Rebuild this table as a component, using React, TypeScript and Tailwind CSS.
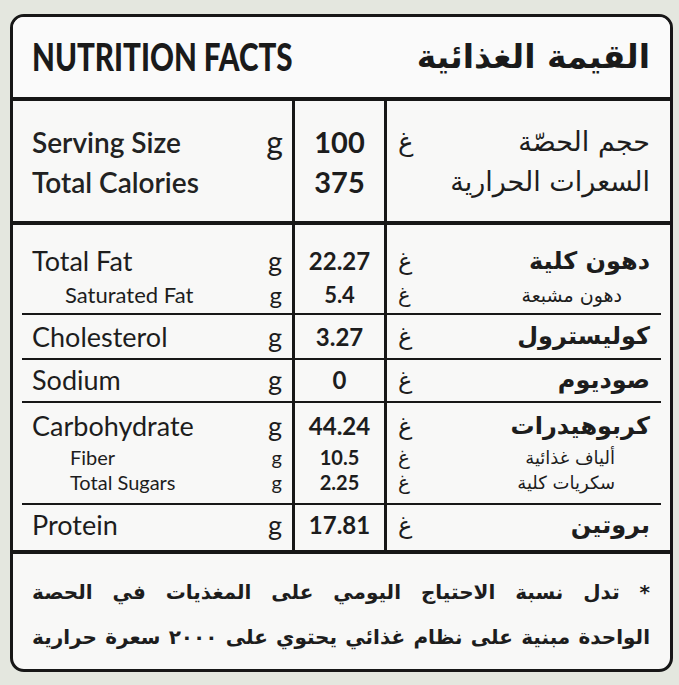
import React from 'react';

type Line = {
  en: string;
  ar: string;
  v: string;
  lh: string;
  sub?: boolean;
  tight?: boolean;
  enPad?: string;
  arPad?: string;
};

type Row = { h: string; pt: string; lines: Line[] };

const rows: Row[] = [
  {
    h: 'h-[88px]',
    pt: 'pt-[18px]',
    lines: [
      { en: 'Total Fat', ar: 'دهون كلية', v: '22.27', lh: 'h-[36px] leading-[36px]' },
      { en: 'Saturated Fat', ar: 'دهون مشبعة', v: '5.4', lh: 'h-[32px] leading-[32px]', sub: true, enPad: 'pl-[52px]', arPad: 'pr-[48px]' },
    ],
  },
  {
    h: 'h-[43px]',
    pt: 'pt-0',
    lines: [{ en: 'Cholesterol', ar: 'كوليسترول', v: '3.27', lh: 'h-[43px] leading-[43px]' }],
  },
  {
    h: 'h-[41px]',
    pt: 'pt-0',
    lines: [{ en: 'Sodium', ar: 'صوديوم', v: '0', lh: 'h-[40px] leading-[40px]' }],
  },
  {
    h: 'h-[100px]',
    pt: 'pt-[4px]',
    lines: [
      { en: 'Carbohydrate', ar: 'كربوهيدرات', v: '44.24', lh: 'h-[38px] leading-[38px]' },
      { en: 'Fiber', ar: 'ألياف غذائية', v: '10.5', lh: 'h-[25px] leading-[25px]', sub: true, tight: true, enPad: 'pl-[57px]', arPad: 'pr-[55px]' },
      { en: 'Total Sugars', ar: 'سكريات كلية', v: '2.25', lh: 'h-[25px] leading-[25px]', sub: true, tight: true, enPad: 'pl-[57px]', arPad: 'pr-[55px]' },
    ],
  },
  {
    h: 'h-[45px]',
    pt: 'pt-0',
    lines: [{ en: 'Protein', ar: 'بروتين', v: '17.81', lh: 'h-[40px] leading-[40px]' }],
  },
];

const lato = "font-['Lato','Open_Sans',sans-serif]";
const arab = "font-['DejaVu_Sans',sans-serif]";

function NutrientRow({ row }: { row: Row }) {
  return (
    <div className={`flex ${row.h}`}>
      <div className={`w-[282px] shrink-0 border-r-[3px] border-[#171717] ${row.pt}`}>
        {row.lines.map((l) => (
          <div key={l.en} className={`flex justify-between pr-[10px] ${l.lh} ${l.sub ? l.enPad : 'pl-[19px]'}`}>
            <span className={`${lato} ${l.tight ? 'text-[20px]' : l.sub ? 'text-[22px]' : 'text-[27px]'} text-[#1d1d1d]`}>{l.en}</span>
            <span className={`${lato} ${l.tight ? 'text-[20px]' : l.sub ? 'text-[24px]' : 'text-[27px]'} text-[#1d1d1d]`}>g</span>
          </div>
        ))}
      </div>
      <div className={`w-[92px] shrink-0 border-r-[3px] border-[#171717] ${row.pt}`}>
        {row.lines.map((l) => (
          <div key={l.en} className={`text-center ${l.lh} ${lato} font-bold ${l.tight ? 'text-[20px]' : l.sub ? 'text-[22px]' : 'text-[24px]'} text-[#1d1d1d]`}>
            {l.v}
          </div>
        ))}
      </div>
      <div className={`flex-1 ${row.pt}`}>
        {row.lines.map((l) => (
          <div key={l.en} className={`flex justify-between pl-[11px] ${l.lh} ${l.sub ? l.arPad : 'pr-[20px]'}`}>
            <span className={`${arab} ${l.tight ? 'text-[20px]' : l.sub ? 'text-[21px]' : 'text-[24px]'} text-[#1d1d1d]`}>غ</span>
            <span dir="rtl" className={`${arab} ${l.tight ? 'text-[18px]' : l.sub ? 'text-[19px]' : 'text-[24px] font-bold'} text-[#1d1d1d]`}>
              {l.ar}
            </span>
          </div>
        ))}
      </div>
    </div>
  );
}

function Sep() {
  return <div className="mx-[9px] h-[2px] bg-[#171717]" />;
}

export default function App() {
  return (
    <div className="w-[679px] h-[685px] bg-[#e4e7df] pt-[14px] pl-[10px]">
      <div className="w-[663px] h-[658px] rounded-[14px] border-[3px] border-[#171717] bg-[#f8f8f7] overflow-hidden flex flex-col">
        {/* Title */}
        <div className="h-[80px] shrink-0 flex items-center justify-between pl-[19px] pr-[20px] bg-[#fafafa]">
          <span className={`${lato} font-black text-[37px] text-[#1a1a1a] origin-left scale-x-[0.8] whitespace-nowrap`}>
            NUTRITION FACTS
          </span>
          <span dir="rtl" className={`${arab} font-bold text-[33px] text-[#1a1a1a]`}>
            القيمة الغذائية
          </span>
        </div>
        <div className="h-[4px] shrink-0 bg-[#171717]" />

        {/* Serving */}
        <div className="flex h-[120px] shrink-0">
          <div className="w-[282px] shrink-0 border-r-[3px] border-[#171717] pt-[21px]">
            <div className="flex justify-between pl-[19px] pr-[9px] h-[40px] leading-[40px]">
              <span className={`${lato} font-semibold text-[28px] text-[#222]`}>Serving Size</span>
              <span className={`${lato} text-[32px] text-[#1d1d1d]`}>g</span>
            </div>
            <div className="pl-[19px] h-[40px] leading-[40px]">
              <span className={`${lato} font-semibold text-[28px] text-[#222]`}>Total Calories</span>
            </div>
          </div>
          <div className="w-[92px] shrink-0 border-r-[3px] border-[#171717] pt-[21px]">
            <div className={`text-center h-[40px] leading-[40px] ${lato} font-bold text-[29px] text-[#1d1d1d]`}>100</div>
            <div className={`text-center h-[40px] leading-[40px] ${lato} font-bold text-[29px] text-[#1d1d1d]`}>375</div>
          </div>
          <div className="flex-1 pt-[21px]">
            <div className="flex justify-between pl-[11px] pr-[20px] h-[40px] leading-[40px]">
              <span className={`${arab} text-[26px] text-[#1d1d1d]`}>غ</span>
              <span dir="rtl" className={`${arab} text-[27px] text-[#1d1d1d]`}>حجم الحصّة</span>
            </div>
            <div className="flex justify-end pr-[20px] h-[40px] leading-[40px]">
              <span dir="rtl" className={`${arab} text-[27px] text-[#1d1d1d]`}>السعرات الحرارية</span>
            </div>
          </div>
        </div>
        <div className="h-[4px] shrink-0 bg-[#171717]" />

        {/* Nutrients */}
        <div className="flex flex-col shrink-0">
          {rows.map((r, i) => (
            <React.Fragment key={i}>
              <NutrientRow row={r} />
              {i < rows.length - 1 && <Sep />}
            </React.Fragment>
          ))}
        </div>
        <div className="h-[4px] shrink-0 bg-[#171717]" />

        {/* Footer */}
        <div dir="rtl" className={`flex-1 pt-[16px] pl-[19px] pr-[20px] ${arab} font-bold text-[20px] text-[#1d1d1d]`}>
          <div className="h-[45px] leading-[45px] whitespace-nowrap text-justify [text-align-last:justify]">
            * تدل نسبة الاحتياج اليومي على المغذيات في الحصة
          </div>
          <div className="h-[45px] leading-[45px] whitespace-nowrap text-justify [text-align-last:justify]">
            الواحدة مبنية على نظام غذائي يحتوي على ٢٠٠٠ سعرة حرارية
          </div>
        </div>
      </div>
    </div>
  );
}
